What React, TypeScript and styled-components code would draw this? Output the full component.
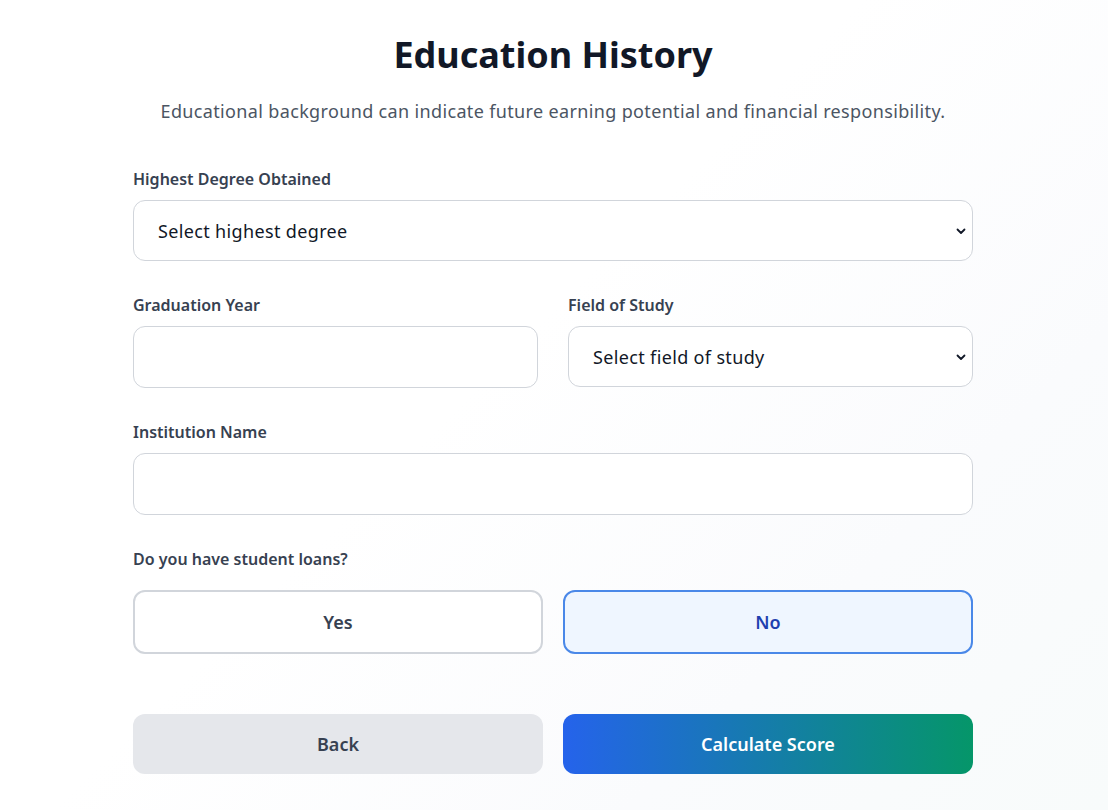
import styled, { createGlobalStyle } from "styled-components"
import { useState } from "react"

const GlobalStyle = createGlobalStyle`
	* {
		box-sizing: border-box;
	}
	body {
		margin: 0;
		font-family: "Noto Sans", "Open Sans", sans-serif;
		color: #111827;
	}
`

const Page = styled.div`
	min-height: 810px;
	background: linear-gradient(135deg, #ffffff 0%, #ffffff 45%, #fafbfd 75%, #f8fbfb 100%);
	display: flex;
	justify-content: center;
	padding: 35px 2px 0 0;
`

const Form = styled.div`
	width: 840px;
	display: flex;
	flex-direction: column;
`

const Title = styled.h1`
	margin: 0;
	text-align: center;
	font-size: 36px;
	line-height: 40px;
	font-weight: 700;
	color: #111827;
`

const Subtitle = styled.p`
	margin: 22px 0 42px;
	text-align: center;
	font-size: 18px;
	line-height: 28px;
	letter-spacing: 0.35px;
	color: #4b5563;
`

const Fields = styled.div`
	display: flex;
	flex-direction: column;
	gap: 32px;
`

const Row = styled.div`
	display: grid;
	grid-template-columns: 1fr 1fr;
	gap: 30px;
`

const Field = styled.div`
	display: flex;
	flex-direction: column;
`

const Label = styled.label<{ $gap?: number }>`
	display: block;
	font-size: 16px;
	line-height: 24px;
	font-weight: 600;
	color: #374151;
	margin-bottom: ${(p) => p.$gap ?? 9}px;
`

const Input = styled.input`
	width: 100%;
	height: 62px;
	padding: 16px 24px;
	font-family: inherit;
	font-size: 18px;
	border: 1px solid #d1d5db;
	border-radius: 12px;
	background: #ffffff;
	outline: none;
`

const SelectWrap = styled.div`
	position: relative;
	svg {
		position: absolute;
		right: 6px;
		top: 50%;
		transform: translateY(-50%);
		pointer-events: none;
	}
`

const Select = styled.select`
	width: 100%;
	height: 61px;
	padding: 0 32px 0 24px;
	font-family: inherit;
	font-size: 18px;
	letter-spacing: 0.35px;
	color: #111827;
	border: 1px solid #d1d5db;
	border-radius: 12px;
	background: #ffffff;
	appearance: none;
	outline: none;
`

const Toggles = styled.div`
	display: grid;
	grid-template-columns: 1fr 1fr;
	gap: 20px;
`

const Toggle = styled.button<{ $active?: boolean }>`
	height: 64px;
	font-family: inherit;
	font-size: 18px;
	font-weight: 600;
	border-radius: 12px;
	border: 2px solid ${(p) => (p.$active ? "#4a88e8" : "#d1d5db")};
	background: ${(p) => (p.$active ? "#eff6ff" : "#ffffff")};
	color: ${(p) => (p.$active ? "#1e40af" : "#374151")};
	cursor: pointer;
`

const Actions = styled.div`
	display: grid;
	grid-template-columns: 1fr 1fr;
	gap: 20px;
	margin-top: 60px;
`

const ActionButton = styled.button<{ $primary?: boolean }>`
	height: 60px;
	font-family: inherit;
	font-size: 18px;
	font-weight: 600;
	border: none;
	border-radius: 12px;
	background: ${(p) => (p.$primary ? "linear-gradient(90deg, #2563eb, #059669)" : "#e5e7eb")};
	color: ${(p) => (p.$primary ? "#ffffff" : "#374151")};
	cursor: pointer;
`

const Chevron = () => (
	<svg width='12' height='12' viewBox='0 0 12 12'>
		<path d='M2.5 4.5 L6 8 L9.5 4.5' fill='none' stroke='#111827' strokeWidth='1.8' strokeLinecap='round' strokeLinejoin='round' />
	</svg>
)

const App = () => {
	const [loans, setLoans] = useState<"yes" | "no">("no")
	return (
		<Page>
			<GlobalStyle />
			<Form>
				<Title>Education History</Title>
				<Subtitle>Educational background can indicate future earning potential and financial responsibility.</Subtitle>
				<Fields>
					<Field>
						<Label>Highest Degree Obtained</Label>
						<SelectWrap>
							<Select defaultValue=''>
								<option value=''>Select highest degree</option>
								<option>High School</option>
								<option>Bachelor's Degree</option>
								<option>Master's Degree</option>
								<option>Doctorate</option>
							</Select>
							<Chevron />
						</SelectWrap>
					</Field>
					<Row>
						<Field>
							<Label>Graduation Year</Label>
							<Input type='number' />
						</Field>
						<Field>
							<Label>Field of Study</Label>
							<SelectWrap>
								<Select defaultValue=''>
									<option value=''>Select field of study</option>
									<option>Engineering</option>
									<option>Business</option>
									<option>Medicine</option>
								</Select>
								<Chevron />
							</SelectWrap>
						</Field>
					</Row>
					<Field>
						<Label>Institution Name</Label>
						<Input type='text' />
					</Field>
					<Field>
						<Label $gap={19}>Do you have student loans?</Label>
						<Toggles>
							<Toggle $active={loans === "yes"} onClick={() => setLoans("yes")}>
								Yes
							</Toggle>
							<Toggle $active={loans === "no"} onClick={() => setLoans("no")}>
								No
							</Toggle>
						</Toggles>
					</Field>
				</Fields>
				<Actions>
					<ActionButton>Back</ActionButton>
					<ActionButton $primary>Calculate Score</ActionButton>
				</Actions>
			</Form>
		</Page>
	)
}

export default App
